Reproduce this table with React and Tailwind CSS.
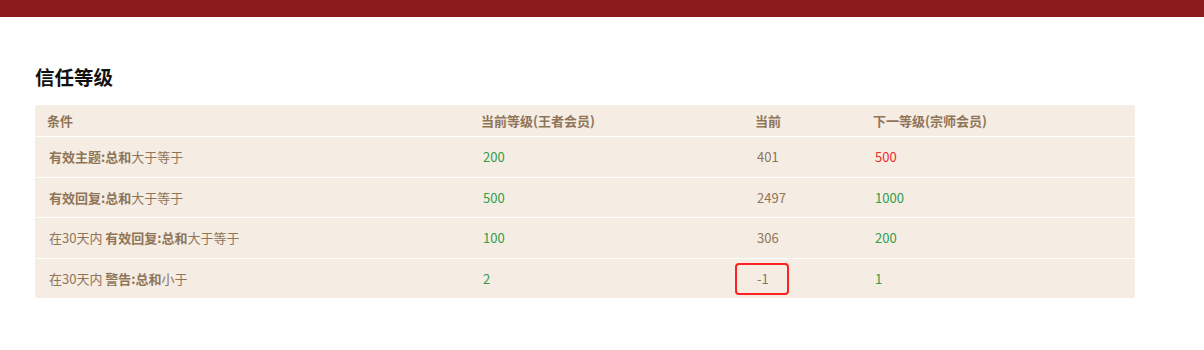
const rows = [
  {
    cond: (
      <>
        <b>有效主题:总和</b>大于等于
      </>
    ),
    cur: { v: "200", c: "text-[#2f9e4b]" },
    now: "401",
    next: { v: "500", c: "text-[#ef2b2b]" },
  },
  {
    cond: (
      <>
        <b>有效回复:总和</b>大于等于
      </>
    ),
    cur: { v: "500", c: "text-[#2f9e4b]" },
    now: "2497",
    next: { v: "1000", c: "text-[#2f9e4b]" },
  },
  {
    cond: (
      <>
        在30天内 <b>有效回复:总和</b>大于等于
      </>
    ),
    cur: { v: "100", c: "text-[#2f9e4b]" },
    now: "306",
    next: { v: "200", c: "text-[#2f9e4b]" },
  },
  {
    cond: (
      <>
        在30天内 <b>警告:总和</b>小于
      </>
    ),
    cur: { v: "2", c: "text-[#2f9e4b]" },
    now: "-1",
    next: { v: "1", c: "text-[#2f9e4b]" },
    mark: true,
  },
];

export default function App() {
  return (
    <div className="min-h-[350px] bg-white font-['Noto_Sans_CJK_SC','Microsoft_YaHei',sans-serif]">
      <div className="h-[17px] bg-[#8b1a1c]" />
      <div className="px-[35px] pt-[46px]">
        <h2 className="text-[19.5px] leading-[27px] font-bold text-[#111]">信任等级</h2>
        <div className="mt-[15px] w-[1100px] rounded-[3px] bg-[#f5ece3] text-[13px] text-[#8f7558]">
          {/* header */}
          <div className="grid h-[31px] grid-cols-[434px_274px_118px_274px] items-center font-bold">
            <div className="pl-[12px]">条件</div>
            <div className="pl-[12px]">当前等级(王者会员)</div>
            <div className="pl-[12px]">当前</div>
            <div className="pl-[12px]">下一等级(宗师会员)</div>
          </div>
          {rows.map((r, i) => (
            <div
              key={i}
              className="grid h-[40.5px] grid-cols-[434px_274px_118px_274px] items-center border-t border-white"
            >
              <div className="pl-[14px]">{r.cond}</div>
              <div className={"pl-[14px] " + r.cur.c}>{r.cur.v}</div>
              <div className="relative pl-[14px]">
                {r.now}
                {r.mark && (
                  <div className="absolute left-[-8px] top-[-6px] h-[32px] w-[54px] rounded-[4px] border-[2.5px] border-[#ff2121]" />
                )}
              </div>
              <div className={"pl-[14px] " + r.next.c}>{r.next.v}</div>
            </div>
          ))}
        </div>
      </div>
    </div>
  );
}
